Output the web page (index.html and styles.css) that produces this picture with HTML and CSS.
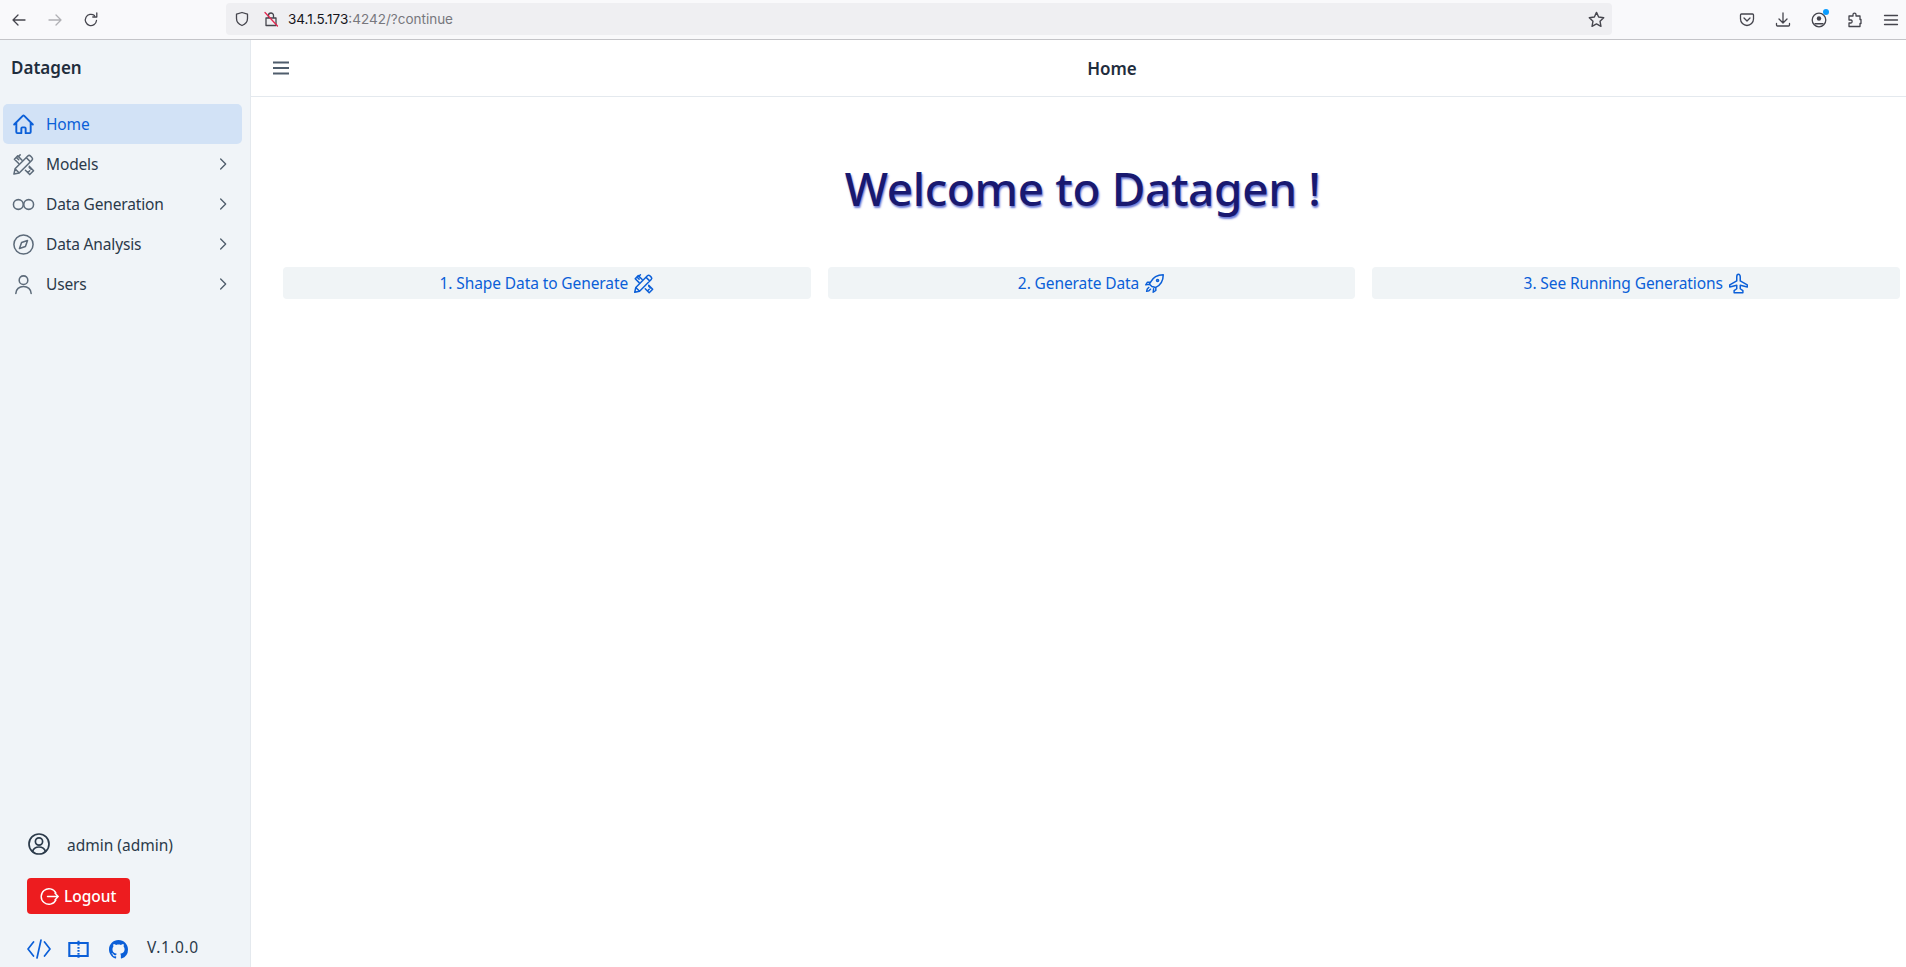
FILE: index.html
```html
<!DOCTYPE html>
<html lang="en">

<head>
    <meta charset="UTF-8">
    <meta name="viewport" content="width=device-width, initial-scale=1.0">
    <title>Datagen</title>
    <link rel="stylesheet" href="styles.css">
</head>

<body>
    <svg class="sprite" xmlns="http://www.w3.org/2000/svg">
        <symbol id="i-home" viewBox="0 0 24 24"><path d="M2.25 12l8.95-8.95c.44-.44 1.15-.44 1.6 0L21.75 12M4.5 9.75v10.1c0 .63.5 1.15 1.12 1.15H9.75v-4.9c0-.6.5-1.1 1.12-1.1h2.25c.63 0 1.13.5 1.13 1.1V21h4.12c.63 0 1.13-.52 1.13-1.15V9.75"/></symbol>
        <symbol id="i-tools" viewBox="0 0 24 24"><path d="M10.500 7.500 6 3 2.500 6.500 7 11M4.800 4.800 7 7M7 3.500 8.500 2M14 18l4.500 4.500 4-4L18 14M16.500 20.500l2-2M20 17l-2-2"/><path d="M2 22l1.200-5.500L16.500 3.200a2 2 0 0 1 2.800 0l1.500 1.500a2 2 0 0 1 0 2.800L7.500 20.800zM15 5l4 4M3.200 16.500l4.300 4.300"/></symbol>
        <symbol id="i-infinity" viewBox="0 0 24 24"><circle cx="6.6" cy="12" r="5.1"/><circle cx="17.4" cy="12" r="5.1"/></symbol>
        <symbol id="i-compass" viewBox="0 0 24 24"><circle cx="12" cy="12" r="10"/><path d="M16.2 7.8 14 14l-6.2 2.2L10 10z"/></symbol>
        <symbol id="i-user" viewBox="0 0 24 24"><circle cx="12" cy="7.5" r="4.5"/><path d="M4 21.5c0-4.6 3.6-7.5 8-7.5s8 2.9 8 7.5"/></symbol>
        <symbol id="i-chevron" viewBox="0 0 24 24"><path d="M8.5 4.5 16 12l-7.5 7.5"/></symbol>
        <symbol id="i-account" viewBox="0 0 24 24"><circle cx="12" cy="12" r="10"/><circle cx="12" cy="9.5" r="3.6"/><path d="M5.5 19.5c1-3 3.6-4.5 6.5-4.5s5.500 1.500 6.500 4.500"/></symbol>
        <symbol id="i-logout" viewBox="0 0 24 24"><path d="M20 7.500A9.800 9.800 0 1 0 20 16.500M9.500 12H23M19 8l4 4-4 4"/></symbol>
        <symbol id="i-code" viewBox="0 0 24 24"><path d="M6.500 5 1 12l5.500 7M17.500 5 23 12l-5.500 7M14 3 10 21"/></symbol>
        <symbol id="i-book" viewBox="0 0 24 24"><path class="book-frame" d="M1.500 4.500h21v15h-21z"/><path class="dotted" d="M12 2v21"/></symbol>
        <symbol id="i-rocket" viewBox="0 0 24 24"><path d="M9 15.500 6 12.500l1.500-2c2.500-5 7-8.500 14.500-8.500 0 7.500-3.500 12-8.500 14.500zM7.500 10.500H4L2 13.500l4-.5M13.500 16.500V20l-3 2 .5-4M5.500 16.500c-1.500 1-2.500 3-2.500 4.500 1.500 0 3.500-1 4.500-2.500"/><circle cx="15.500" cy="8.500" r="1.200"/></symbol>
        <symbol id="i-plane" viewBox="0 0 24 24"><path d="M12 1.500c-1.200 0-2 1.500-2 3V9l-8 4.500V16l8-2v4l-3 2.200V22.500h10v-2.300L14 18v-4l8 2v-2.500L14 9V4.500c0-1.500-.8-3-2-3z"/></symbol>
    </svg>

    <div class="browser">
        <header class="toolbar">
            <div class="nav-btns">
                <svg class="tb-icon" viewBox="0 0 16 16"><path d="M14 8H2M7 3 2 8l5 5"/></svg>
                <svg class="tb-icon faded" viewBox="0 0 16 16"><path d="M2 8h12M9 3l5 5-5 5"/></svg>
                <svg class="tb-icon" viewBox="0 0 16 16"><path d="M13.500 8.500A5.600 5.600 0 1 1 11.500 3.600M13.800 1v4h-4"/></svg>
            </div>
            <div class="urlbar">
                <svg class="tb-icon" viewBox="0 0 16 16"><path d="M8 1.500 2.500 3.200v4.300c0 3.500 2.300 5.800 5.500 7 3.200-1.200 5.500-3.500 5.500-7V3.200z"/></svg>
                <svg class="tb-icon lock" viewBox="0 0 16 16"><path d="M3 7h10v7.500H3zM5.500 7V4.500a2.500 2.500 0 0 1 5 0V7"/><path class="slash" d="M2 1.500 14.500 15"/></svg>
                <span class="url"><b>34.1.5.173</b>:4242/?continue</span>
                <svg class="tb-icon star" viewBox="0 0 16 16"><path d="m8 1.300 2 4.400 4.800.6-3.500 3.300.9 4.800L8 12.100l-4.200 2.300.9-4.800L1.200 6.300 6 5.700z"/></svg>
            </div>
            <div class="tb-right">
                <svg class="tb-icon" viewBox="0 0 16 16"><path d="M2.500 2h11c.6 0 1 .4 1 1v4c0 3.500-3 6.500-6.500 6.500S1.500 10.500 1.500 7V3c0-.6.4-1 1-1zM5 6l3 3 3-3"/></svg>
                <svg class="tb-icon" viewBox="0 0 16 16"><path d="M8 1v9.500M4 7l4 4 4-4M1.500 11.500v1.500c0 .6.400 1 1 1h11c.6 0 1-.4 1-1v-1.500"/></svg>
                <span class="account">
                    <svg class="tb-icon" viewBox="0 0 16 16"><circle cx="8" cy="8" r="6.800"/><circle class="solid" cx="8" cy="6.500" r="2.200"/><path class="solid" d="M3.500 11h9v1.500h-9z"/></svg>
                    <i class="dot"></i>
                </span>
                <svg class="tb-icon" viewBox="0 0 16 16"><path d="M6 2.500c0-1.800 3-1.800 3 0V4h4v3.500h1v4h-1v3H2V11h2c1.500 0 1.500-3 0-3H2V4h4z"/></svg>
                <svg class="tb-icon" viewBox="0 0 16 16"><path d="M1.500 3.500h13M1.500 8h13M1.500 12.500h13"/></svg>
            </div>
        </header>

        <div class="app">
            <aside class="sidebar">
                <div class="brand">Datagen</div>
                <nav class="menu">
                    <a class="menu-item active"><svg class="icon"><use href="#i-home"/></svg><span>Home</span></a>
                    <a class="menu-item"><svg class="icon"><use href="#i-tools"/></svg><span>Models</span><svg class="chev"><use href="#i-chevron"/></svg></a>
                    <a class="menu-item"><svg class="icon"><use href="#i-infinity"/></svg><span>Data Generation</span><svg class="chev"><use href="#i-chevron"/></svg></a>
                    <a class="menu-item"><svg class="icon"><use href="#i-compass"/></svg><span>Data Analysis</span><svg class="chev"><use href="#i-chevron"/></svg></a>
                    <a class="menu-item"><svg class="icon"><use href="#i-user"/></svg><span>Users</span><svg class="chev"><use href="#i-chevron"/></svg></a>
                </nav>
                <div class="side-bottom">
                    <div class="who"><svg class="who-icon"><use href="#i-account"/></svg><span>admin (admin)</span></div>
                    <button class="logout"><svg class="logout-icon"><use href="#i-logout"/></svg>Logout</button>
                    <div class="links">
                        <svg class="link-icon"><use href="#i-code"/></svg>
                        <svg class="link-icon book"><use href="#i-book"/></svg>
                        <svg class="link-icon github" viewBox="0 0 16 16"><path d="M8 0C3.580 0 0 3.580 0 8c0 3.540 2.290 6.530 5.470 7.590.4.070.55-.17.55-.38 0-.19-.01-.82-.01-1.490-2.010.37-2.530-.49-2.690-.94-.09-.23-.48-.94-.82-1.130-.28-.15-.68-.52-.01-.53.63-.01 1.080.58 1.230.82.720 1.210 1.870.87 2.330.66.070-.52.280-.87.510-1.070-1.780-.2-3.640-.89-3.640-3.950 0-.87.310-1.590.820-2.150-.08-.2-.36-1.020.080-2.120 0 0 .67-.21 2.200.82.640-.18 1.320-.27 2-.27s1.360.09 2 .27c1.530-1.040 2.200-.82 2.200-.82.440 1.100.160 1.920.080 2.120.510.560.820 1.270.820 2.150 0 3.070-1.870 3.750-3.650 3.950.290.250.540.730.540 1.480 0 1.070-.01 1.930-.01 2.200 0 .21.150.46.550.38A8.010 8.010 0 0 0 16 8c0-4.420-3.580-8-8-8z"/></svg>
                        <span class="version">V.1.0.0</span>
                    </div>
                </div>
            </aside>

            <div class="content">
                <div class="topbar">
                    <svg class="burger" viewBox="0 0 16 16"><path d="M0 2.500h16M0 8h16M0 13.500h16"/></svg>
                    <div class="page-title">Home</div>
                </div>
                <main class="page">
                    <h1>Welcome to Datagen !</h1>
                    <div class="steps">
                        <a class="step">1. Shape Data to Generate <svg class="step-icon"><use href="#i-tools"/></svg></a>
                        <a class="step">2. Generate Data <svg class="step-icon"><use href="#i-rocket"/></svg></a>
                        <a class="step">3. See Running Generations <svg class="step-icon"><use href="#i-plane"/></svg></a>
                    </div>
                </main>
            </div>
        </div>
    </div>
</body>

</html>
```

FILE: styles.css
```css
* {
    margin: 0;
    padding: 0;
    box-sizing: border-box;
}

body {
    font-family: 'Noto Sans', 'Open Sans', sans-serif;
    background-color: #fff;
    color: #1f2d3d;
    overflow: hidden;
}

.sprite {
    display: none;
}

svg {
    fill: none;
    stroke: currentColor;
    stroke-linecap: round;
    stroke-linejoin: round;
}

.browser {
    display: flex;
    flex-direction: column;
    height: 967px;
}

/* browser chrome */
.toolbar {
    display: flex;
    align-items: center;
    height: 40px;
    background-color: #f9f9fb;
    border-bottom: 1px solid #c4c4c8;
    color: #45454d;
    flex-shrink: 0;
}

.tb-icon {
    width: 16px;
    height: 16px;
    stroke-width: 1.300;
    flex-shrink: 0;
}

.faded {
    opacity: 0.4;
}

.nav-btns {
    display: flex;
    gap: 20px;
    width: 226px;
    padding-left: 11px;
}

.urlbar {
    display: flex;
    align-items: center;
    width: 1386px;
    height: 32px;
    padding: 0 7px 0 8px;
    margin-bottom: 1px;
    background-color: #efeff2;
    border-radius: 4px;
}

.lock {
    margin-left: 13px;
}

.slash {
    stroke: #e22850;
}

.url {
    flex: 1;
    margin-left: 9px;
    font-family: 'Inter', 'Liberation Sans', sans-serif;
    font-size: 13.500px;
    color: #77777d;
}

.url b {
    font-weight: 400;
    color: #15141a;
}

.star {
    width: 17px;
    height: 17px;
}

.tb-right {
    display: flex;
    align-items: center;
    gap: 20px;
    margin-left: 127px;
}

.account {
    position: relative;
    display: flex;
}

.solid {
    fill: currentColor;
    stroke: none;
}

.dot {
    position: absolute;
    top: -3px;
    right: -2px;
    width: 6px;
    height: 6px;
    background-color: #0a9dff;
    border-radius: 50%;
}

/* app */
.app {
    display: flex;
    flex: 1;
    min-height: 0;
}

.sidebar {
    display: flex;
    flex-direction: column;
    width: 251px;
    flex-shrink: 0;
    background-color: #f0f4f8;
    border-right: 1px solid #e4e9ee;
}

.brand {
    height: 64px;
    padding: 16px 0 0 11px;
    font-size: 17px;
    font-weight: 600;
    color: #1f2d3d;
}

.menu {
    display: flex;
    flex-direction: column;
    padding: 0 8px 0 3px;
}

.menu-item {
    display: flex;
    align-items: center;
    height: 40px;
    padding-left: 9px;
    border-radius: 5px;
    font-size: 15.500px;
    letter-spacing: -0.150px;
    color: #2b3a4a;
}

.menu-item span {
    flex: 1;
    margin-left: 11px;
}

.menu-item.active {
    background-color: #d2e2f6;
    color: #0b5fd8;
}

.icon {
    width: 23px;
    height: 23px;
    stroke-width: 1.600;
    color: #5d6b7a;
}

.active .icon {
    color: #0b5fd8;
    stroke-width: 2;
}

.chev {
    width: 16px;
    height: 16px;
    margin-right: 11px;
    stroke-width: 2;
    color: #4f5d6c;
}

.side-bottom {
    margin-top: auto;
    padding: 0 0 4px 27px;
}

.who {
    display: flex;
    align-items: center;
    height: 24px;
    font-size: 15.500px;
    color: #2b3a4a;
}

.who span {
    margin-left: 16px;
}

.who-icon {
    width: 24px;
    height: 24px;
    stroke-width: 1.700;
    margin-top: -3px;
}

.logout {
    display: flex;
    align-items: center;
    width: 103px;
    height: 36px;
    margin-top: 21px;
    padding-left: 13px;
    background-color: #ed1c1f;
    border: none;
    border-radius: 4px;
    color: #fff;
    font-family: inherit;
    font-size: 15.500px;
    font-weight: 500;
}

.logout-icon {
    width: 19px;
    height: 19px;
    stroke-width: 1.800;
    margin-right: 5px;
}

.links {
    display: flex;
    align-items: center;
    height: 28px;
    margin-top: 21px;
    color: #0b5fd8;
}

.link-icon {
    width: 24px;
    height: 24px;
    margin-right: 17px;
    stroke-width: 1.700;
}

.book {
    width: 21px;
    height: 21px;
    margin-right: 20px;
}

.book-frame {
    stroke-width: 2.400;
    stroke-linejoin: miter;
}

.dotted {
    stroke-width: 2.400;
    stroke-linecap: butt;
    stroke-dasharray: 2 1.500;
}

.github {
    width: 19px;
    height: 19px;
    fill: currentColor;
    stroke: none;
    margin-right: 19px;
}

.version {
    font-size: 15.500px;
    letter-spacing: 0.600px;
    color: #2b3a4a;
    margin-top: -5px;
}

.content {
    display: flex;
    flex-direction: column;
    flex: 1;
    min-width: 0;
}

.topbar {
    display: flex;
    align-items: center;
    height: 57px;
    padding-left: 22px;
    border-bottom: 1px solid #e4e9ee;
    flex-shrink: 0;
}

.burger {
    width: 16px;
    height: 16px;
    stroke: #4f5d6c;
    stroke-width: 1.800;
    flex-shrink: 0;
}

.page-title {
    flex: 1;
    text-align: center;
    padding-left: 29px;
    font-size: 17px;
    font-weight: 600;
    color: #1f2d3d;
}

.page {
    padding: 0 6px 0 32px;
}

h1 {
    margin-top: 58px;
    padding-right: 18px;
    text-align: center;
    font-size: 46px;
    line-height: 66px;
    font-weight: 500;
    letter-spacing: -0.400px;
    color: #191970;
    text-shadow: 1px 2px 2px #6c7bd8;
}

.steps {
    display: grid;
    grid-template-columns: repeat(3, 1fr);
    gap: 17px;
    margin-top: 46px;
}

.step {
    display: flex;
    align-items: center;
    justify-content: center;
    gap: 5px;
    height: 32px;
    background-color: #f0f4f6;
    border-radius: 4px;
    font-size: 15.500px;
    letter-spacing: -0.100px;
    color: #0b5fd8;
}

.step-icon {
    width: 21px;
    height: 21px;
    stroke-width: 1.700;
}
```
